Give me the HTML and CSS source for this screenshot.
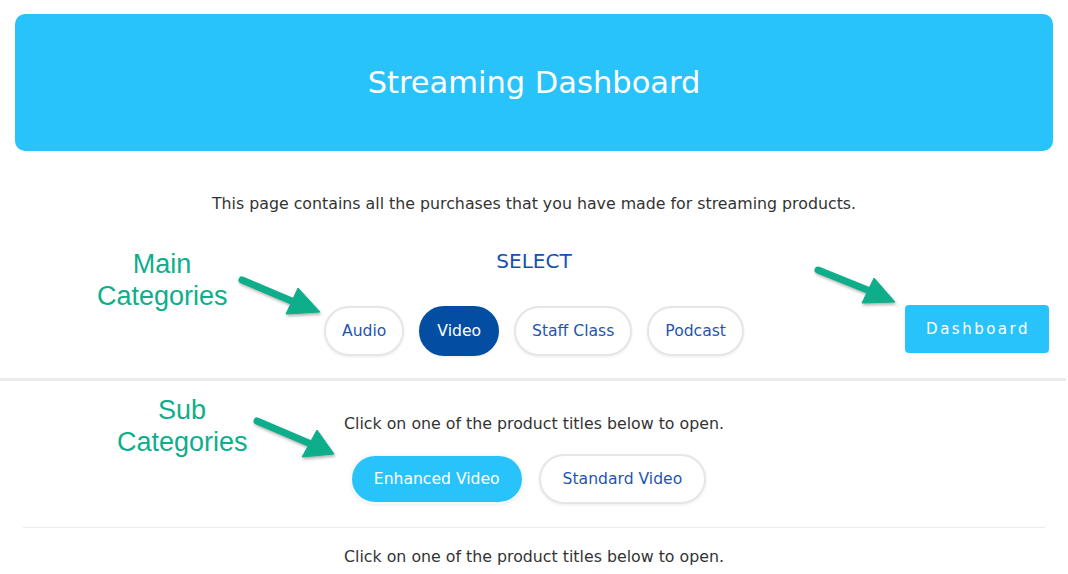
FILE: index.html
```html
<!DOCTYPE html>
<html lang="en">
<head>
  <meta charset="UTF-8">
  <title>Streaming Dashboard</title>
  <link rel="stylesheet" href="styles.css">
</head>
<body>
  <div class="page">

    <header class="banner">
      <h1>Streaming Dashboard</h1>
    </header>

    <p class="intro">This page contains all the purchases that you have made for streaming products.</p>

    <div class="select-area">
      <div class="select-label">SELECT</div>
      <div class="pills main-pills">
        <button class="pill">Audio</button>
        <button class="pill active">Video</button>
        <button class="pill">Staff Class</button>
        <button class="pill">Podcast</button>
      </div>
      <button class="dash-btn">Dashboard</button>
    </div>

    <div class="divider"></div>

    <section class="sub">
      <p class="hint">Click on one of the product titles below to open.</p>
      <div class="pills sub-pills">
        <button class="pill sub-pill current">Enhanced Video</button>
        <button class="pill sub-pill">Standard Video</button>
      </div>
      <hr class="rule">
      <p class="hint">Click on one of the product titles below to open.</p>
    </section>

    <!-- annotations drawn over the page -->
    <div class="note note-main">Main<br>Categories</div>
    <div class="note note-sub">Sub<br>Categories</div>

    <svg class="arrows" width="1068" height="574" viewBox="0 0 1068 574">
      <g fill="#0fae8b" stroke="#0fae8b">
        <line x1="242" y1="280" x2="294" y2="302" stroke-width="7" stroke-linecap="round"/>
        <polygon points="298,288 286,314 320,312" stroke-width="1" stroke-linejoin="round"/>

        <line x1="818" y1="270" x2="870" y2="291" stroke-width="7" stroke-linecap="round"/>
        <polygon points="874,278 862,303 895,302" stroke-width="1" stroke-linejoin="round"/>

        <line x1="257" y1="421" x2="311" y2="444" stroke-width="7" stroke-linecap="round"/>
        <polygon points="317,430 302,457 334,454" stroke-width="1" stroke-linejoin="round"/>
      </g>
    </svg>

  </div>
</body>
</html>
```

FILE: styles.css
```css
* {
  box-sizing: border-box;
}

body {
  margin: 0;
  padding: 0;
  background: #fff;
  font-family: 'DejaVu Sans', 'Noto Sans', sans-serif;
  color: #333;
}

.page {
  position: relative;
  width: 1068px;
  height: 574px;
  overflow: hidden;
  padding-top: 14px;
}

.banner {
  margin: 0 15px;
  height: 137px;
  background-color: #29c3fb;
  border-radius: 10px;
  display: flex;
  align-items: center;
  justify-content: center;
}

.banner h1 {
  margin: 0;
  color: white;
  font-size: 30.5px;
  font-weight: normal;
}

.intro {
  margin: 41px 0 0;
  text-align: center;
  font-size: 15.8px;
  line-height: 24px;
}

.select-area {
  display: grid;
  grid-template-columns: 1fr auto 1fr;
  margin-top: 33px;
}

.select-label {
  grid-column: 2;
  grid-row: 1;
  text-align: center;
  color: #1650b0;
  font-size: 20px;
  line-height: 24px;
}

.main-pills {
  grid-column: 2;
  grid-row: 2;
  margin-top: 33px;
}

.dash-btn {
  grid-column: 3;
  grid-row: 2;
  justify-self: end;
  align-self: end;
  margin: 0 19px 3px 0;
  height: 48px;
  padding: 0 19px 0 21px;
  border: none;
  border-radius: 4px;
  background-color: #29c3fb;
  color: white;
  font-family: inherit;
  font-size: 15px;
  letter-spacing: 2.5px;
}

.pills {
  display: flex;
  justify-content: center;
  gap: 15px;
}

.pill {
  height: 50px;
  padding: 0 16px;
  border: 2px solid #e6e6e6;
  border-radius: 25px;
  background: white;
  box-shadow: 0 1px 3px rgba(0, 0, 0, 0.08);
  color: #1f55ae;
  font-family: inherit;
  font-size: 15.6px;
}

.pill.active {
  background-color: #034ea2;
  border-color: #034ea2;
  color: white;
}

.divider {
  margin: 22px 2px 0 0;
  height: 3px;
  background-color: #ebebeb;
  border-radius: 0 2px 2px 0;
}

.hint {
  margin: 0;
  text-align: center;
  font-size: 15.8px;
  line-height: 24px;
}

.sub {
  padding-top: 31px;
}

.sub-pills {
  margin-top: 18px;
  padding-right: 12px;
}

.sub-pill {
  height: 50px;
  padding: 0 22px;
}

.sub-pill.current {
  background-color: #29c3fb;
  border-color: #f4fbff;
  color: white;
}

.rule {
  margin: 23px 23px 17px;
  border: none;
  border-top: 1px solid #ebebeb;
}

.note {
  position: absolute;
  width: 130px;
  text-align: center;
  font-family: 'Liberation Sans', Arial, sans-serif;
  font-size: 27px;
  line-height: 32px;
  color: #0fae8b;
}

.note-main {
  left: 97px;
  top: 248px;
}

.note-sub {
  left: 117px;
  top: 394px;
}

.arrows {
  position: absolute;
  top: 0;
  left: 0;
  pointer-events: none;
  filter: drop-shadow(1px 2px 1.5px rgba(0, 0, 0, 0.3));
}
```
